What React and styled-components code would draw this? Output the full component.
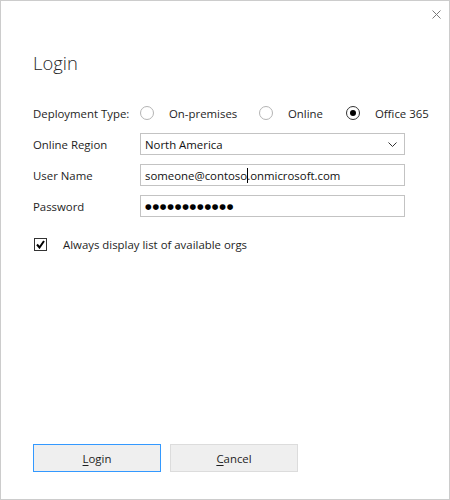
import styled, { createGlobalStyle } from "styled-components";

const GlobalStyle = createGlobalStyle`
  html, body {
    margin: 0;
    padding: 0;
    background: #ffffff;
  }
  * {
    box-sizing: border-box;
  }
`;

const Window = styled.div`
  width: 450px;
  height: 500px;
  border: 1px solid #cccccc;
  background: #ffffff;
  display: flex;
  flex-direction: column;
  padding: 0 32px 27px 32px;
  font-family: "Open Sans", "Liberation Sans", sans-serif;
  font-size: 11.4px;
  color: #1e1e1e;
`;

const TopBar = styled.div`
  height: 26px;
  display: flex;
  justify-content: flex-end;
  align-items: flex-start;
  margin-right: -24px;
  padding-top: 8px;
`;

const CloseButton = styled.button`
  border: none;
  background: transparent;
  padding: 0;
  width: 10px;
  height: 10px;
  display: flex;
  align-items: center;
  justify-content: center;
  cursor: pointer;
`;

const Title = styled.h1`
  margin: 24px 0 0 0;
  font-size: 18.4px;
  line-height: 24px;
  font-weight: 300;
  color: #262626;
`;

const Form = styled.div`
  margin-top: 27px;
  display: grid;
  grid-template-columns: 107px 265px;
  grid-auto-rows: 22px;
  row-gap: 9px;
  align-items: center;
`;

const Label = styled.div`
  white-space: nowrap;
`;

const RadioGroup = styled.div`
  display: flex;
  align-items: center;
  white-space: nowrap;
`;

const RadioOption = styled.label`
  display: flex;
  align-items: center;
  gap: 15px;
  flex: 0 0 ${(p) => (p.$width ? `${p.$width}px` : "auto")};
`;

const RadioCircle = styled.span`
  width: 14px;
  height: 14px;
  border-radius: 50%;
  border: 1px solid ${(p) => (p.$checked ? "#333333" : "#b4b4b4")};
  display: flex;
  align-items: center;
  justify-content: center;

  &::after {
    content: "";
    width: 6px;
    height: 6px;
    border-radius: 50%;
    background: #000000;
    display: ${(p) => (p.$checked ? "block" : "none")};
  }
`;

const Field = styled.div`
  height: 22px;
  border: 1px solid #c3c3c3;
  display: flex;
  align-items: center;
  padding: 0 4px 0 4px;
  white-space: nowrap;
  color: #111111;
`;

const Select = styled(Field)`
  justify-content: space-between;
  padding-right: 7px;
`;

const Caret = styled.span`
  display: inline-block;
  width: 1px;
  height: 15px;
  background: #000000;
  vertical-align: middle;
  margin: 0 -1px 0 0;
`;

const Dots = styled.span`
  font-family: "DejaVu Sans", sans-serif;
  font-size: 7.6px;
  letter-spacing: 0.8px;
  color: #000000;
`;

const CheckRow = styled.label`
  margin-top: 16px;
  height: 22px;
  display: flex;
  align-items: center;
  gap: 16px;
  padding-left: 1px;
`;

const CheckBox = styled.span`
  width: 13px;
  height: 13px;
  border: 1px solid #333333;
  display: flex;
  align-items: center;
  justify-content: center;
`;

const Buttons = styled.div`
  margin-top: auto;
  display: flex;
  gap: 9px;
`;

const Button = styled.button`
  width: 128px;
  height: 28px;
  border: 1px solid ${(p) => (p.$focused ? "#3399ff" : "#dcdcdc")};
  background: #efefef;
  font-family: inherit;
  font-size: 11.4px;
  color: #1e1e1e;
  padding: 0;
  cursor: pointer;

  u {
    text-underline-offset: 2px;
  }
`;

const App = () => {
  return (
    <>
      <GlobalStyle />
      <Window>
        <TopBar>
          <CloseButton aria-label="Close">
            <svg width="9" height="9" viewBox="0 0 9 9">
              <path d="M0.5 0.5 L8.5 8.5 M8.5 0.5 L0.5 8.5" stroke="#7a7a7a" strokeWidth="1" fill="none" />
            </svg>
          </CloseButton>
        </TopBar>
        <Title>Login</Title>
        <Form>
          <Label>Deployment Type:</Label>
          <RadioGroup>
            <RadioOption $width={119}>
              <RadioCircle />
              On-premises
            </RadioOption>
            <RadioOption $width={87}>
              <RadioCircle />
              Online
            </RadioOption>
            <RadioOption>
              <RadioCircle $checked />
              Office 365
            </RadioOption>
          </RadioGroup>

          <Label>Online Region</Label>
          <Select>
            North America
            <svg width="9" height="5" viewBox="0 0 9 5">
              <path d="M0.5 0.5 L4.5 4.5 L8.5 0.5" stroke="#333333" strokeWidth="1" fill="none" />
            </svg>
          </Select>

          <Label>User Name</Label>
          <Field>
            someone@contoso<Caret />.onmicrosoft.com
          </Field>

          <Label>Password</Label>
          <Field>
            <Dots>●●●●●●●●●●●●</Dots>
          </Field>
        </Form>

        <CheckRow>
          <CheckBox>
            <svg width="9" height="9" viewBox="0 0 9 9">
              <path d="M1 4.5 L3.5 7.5 L8 1" stroke="#000000" strokeWidth="2" fill="none" />
            </svg>
          </CheckBox>
          Always display list of available orgs
        </CheckRow>

        <Buttons>
          <Button $focused>
            <u>L</u>ogin
          </Button>
          <Button>
            <u>C</u>ancel
          </Button>
        </Buttons>
      </Window>
    </>
  );
};

export default App;
